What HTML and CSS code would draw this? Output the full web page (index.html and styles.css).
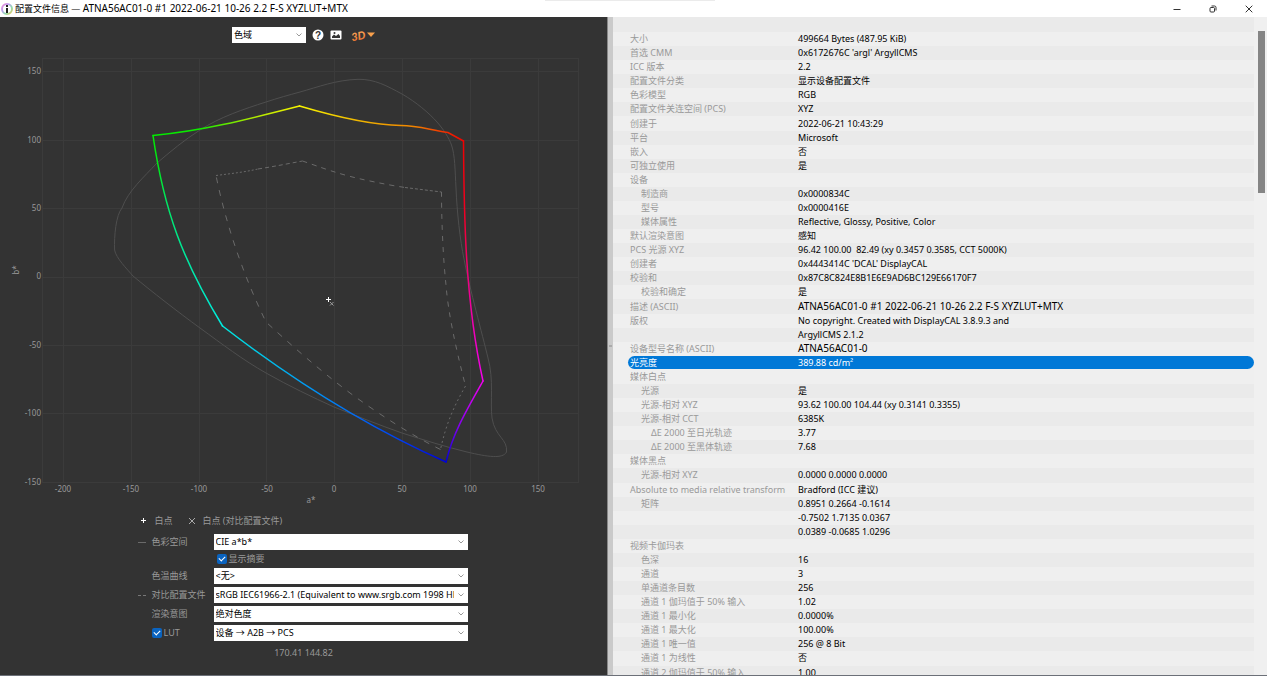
FILE: index.html
```html
<!DOCTYPE html>
<html lang="zh-CN">
<head>
<meta charset="utf-8">
<title>配置文件信息</title>
<link rel="stylesheet" href="styles.css">
</head>
<body>
<div class="window">
  <header class="titlebar">
    <svg class="app-icon" viewBox="0 0 12 12" aria-hidden="true">
      <defs><linearGradient id="ringA" x1="0" y1="0" x2="1" y2="1"><stop offset="0" stop-color="#f08ad8"/><stop offset=".35" stop-color="#b9a0ee"/><stop offset=".65" stop-color="#8fdcae"/><stop offset="1" stop-color="#e8c860"/></linearGradient></defs>
      <circle cx="6" cy="6" r="5" fill="#fff" stroke="url(#ringA)" stroke-width="2"/>
      <rect x="5" y="2" width="2" height="2" fill="#222"/><rect x="5" y="5" width="2" height="5" fill="#222"/>
    </svg>
    <h1 class="title">配置文件信息 — <span class="profile-name">ATNA56AC01-0 #1 2022-06-21 10-26 2.2 F-S XYZLUT+MTX</span></h1>
    <div class="snap-hint"></div>
    <div class="window-buttons">
      <button type="button" aria-label="最小化"><svg viewBox="0 0 8 8"><path d="M.5 4.500h7"/></svg></button>
      <button type="button" aria-label="还原"><svg viewBox="0 0 8 8"><rect x="1" y="2.500" width="4.500" height="4.500" rx="1"/><path d="M2.500 1h3q1.500 0 1.500 1.500v3"/></svg></button>
      <button type="button" aria-label="关闭"><svg viewBox="0 0 8 8"><path d="M.7.700l6.600 6.600M7.300.700l-6.600 6.600"/></svg></button>
    </div>
  </header>
  <main class="panes">
    <section class="plot-pane">
      <div class="toolbar">
        <div class="select-box view-select">
          <select aria-label="视图"><option>色域</option></select>
          <svg class="chevron" viewBox="0 0 6 4"><path d="M.5.500L3 3 5.500.500"/></svg>
        </div>
        <button type="button" class="tool" aria-label="帮助"><svg width="12" height="12" viewBox="0 0 12 12"><circle cx="6" cy="6" r="5.500" fill="#fff"/><text x="6" y="9.500" text-anchor="middle" class="help-mark">?</text></svg></button>
        <button type="button" class="tool" aria-label="保存图像"><svg width="12" height="12" viewBox="0 0 12 12"><rect x=".5" y="1.500" width="11" height="9" rx="1" fill="#fff"/><path d="M2 9V7.500L4 5.500l2 1.500L8.500 5 10 7v2z" fill="#333"/><circle cx="4.500" cy="4" r="1" fill="#333"/></svg></button>
        <button type="button" class="tool tool-3d" aria-label="3D"><svg width="24" height="14" viewBox="0 0 24 14"><defs><linearGradient id="fire" x1="0" y1="0" x2="0" y2="1"><stop offset="0" stop-color="#ffb060"/><stop offset="1" stop-color="#e8702c"/></linearGradient></defs><text x="0" y="12" class="three-d" transform="rotate(-10 7 7)">3D</text><path d="M16 4.500h8L20 9z" fill="#f9a04c"/></svg></button>
      </div>
      <svg class="plot" viewBox="0 50 607 462" role="img" aria-label="CIE a*b* 色域图">
        <defs>
          <linearGradient id="gy" gradientUnits="userSpaceOnUse" x1="153" y1="0" x2="300" y2="0"><stop offset="0" stop-color="#00ec00"/><stop offset=".32" stop-color="#10ea00"/><stop offset=".65" stop-color="#a4e800"/><stop offset="1" stop-color="#f8f400"/></linearGradient>
          <linearGradient id="yr" gradientUnits="userSpaceOnUse" x1="300" y1="0" x2="464" y2="0"><stop offset="0" stop-color="#f8f400"/><stop offset=".35" stop-color="#f0b800"/><stop offset=".7" stop-color="#f08200"/><stop offset=".88" stop-color="#f03000"/><stop offset="1" stop-color="#f00000"/></linearGradient>
          <linearGradient id="rm" gradientUnits="userSpaceOnUse" x1="0" y1="141" x2="0" y2="381"><stop offset="0" stop-color="#f00000"/><stop offset=".3" stop-color="#f00024"/><stop offset=".6" stop-color="#f00088"/><stop offset="1" stop-color="#f400f0"/></linearGradient>
          <linearGradient id="mb" gradientUnits="userSpaceOnUse" x1="0" y1="381" x2="0" y2="462"><stop offset="0" stop-color="#f400f0"/><stop offset=".55" stop-color="#8600f0"/><stop offset=".8" stop-color="#3a00e0"/><stop offset="1" stop-color="#0000d0"/></linearGradient>
          <linearGradient id="bc" gradientUnits="userSpaceOnUse" x1="446" y1="462" x2="222" y2="326"><stop offset="0" stop-color="#0000d8"/><stop offset=".2" stop-color="#0040f4"/><stop offset=".6" stop-color="#0098f4"/><stop offset="1" stop-color="#00ece0"/></linearGradient>
          <linearGradient id="cg" gradientUnits="userSpaceOnUse" x1="0" y1="326" x2="0" y2="136"><stop offset="0" stop-color="#00ece0"/><stop offset=".35" stop-color="#00e8a0"/><stop offset=".65" stop-color="#00e864"/><stop offset=".85" stop-color="#00ea18"/><stop offset="1" stop-color="#00ec00"/></linearGradient>
        </defs>
        <path class="grid" d="M42.500 58V482M63.500 58V482M131.500 58V482M199.500 58V482M266.500 58V482M334.500 58V482M402.500 58V482M470.500 58V482M538.500 58V482M578.500 58V482M42 58.500H579M42 71.500H579M42 140.500H579M42 208.500H579M42 277.500H579M42 345.500H579M42 413.500H579M42 482.500H579"/>
        <path class="locus" d="M300 92C318 87 336 80 358 79.300C375 79 387 86 402 94C416 102 429 113 437 122C444 130 449 138 451.500 145C455 155 455 170 456 188C457 212 460 240 464 259C470 290 482 333 488 358C494 380 490 402 492 418C495 437 508 439 506.500 452C503 459 488 457 467 452C446 447 424 440 402 433C379 425 357 416 334 407C312 397 289 386 266 373C243 360 222 344 200 328C178 312 151 291 133 276C127 269 116 258 114.600 250C114 236 116 215 122 208C128 191 144 177 157 163C170 152 184 140 200 130C220 117 244 109 266 102C278 98 289 95 300 92Z"/>
        <g class="compare">
          <path stroke-dasharray="2 2" d="M216 175.500C232 173.500 245 172 258 169"/>
          <path stroke-dasharray="4 3" d="M258 169C274 166.500 289 163.500 302.500 161"/>
          <path stroke-dasharray="5 5" d="M302.500 161C320 167 340 175 370 181C384 184 395 186 405 187.500"/>
          <path stroke-dasharray="3 2" d="M405 187.500L441.500 192"/>
          <path stroke-dasharray="5 6" d="M441.500 192C441.500 220 443 257 446 285C448 311 455 345 465.500 386"/>
          <path stroke-dasharray="2 3" d="M465.500 386C454 406 446 424 440.500 449.500"/>
          <path stroke-dasharray="6 7" d="M440.500 449.500C413 436 380 415 350 393C318 369 290 344 266 322C244 277 226 225 216 175.500"/>
        </g>
        <g class="gamut">
          <path stroke="url(#gy)" d="M153 135.500C202 131 245 120 299.500 106"/>
          <path stroke="url(#yr)" d="M299.500 106C330 115 367 125 401 125.500C418 125.500 430 130 448 132.500L463.500 141"/>
          <path stroke="url(#rm)" d="M463.500 141C464 216 465 300 483 381"/>
          <path stroke="url(#mb)" d="M483 381C466 411 453 433 446 462"/>
          <path stroke="url(#bc)" d="M446 462C374 430 295 382 222.500 326"/>
          <path stroke="url(#cg)" d="M222.500 326C183 261 164 211 153 135.500"/>
        </g>
        <path class="wp" d="M326 299.500h5M328.500 297v5"/>
        <path class="wp-compare" d="M330 302l3.500 3.500M333.500 302l-3.500 3.500"/>
        <g class="ticks ticks-y">
          <text x="41" y="74">150</text><text x="41" y="143">100</text><text x="41" y="211">50</text><text x="41" y="279">0</text><text x="41" y="348">-50</text><text x="41" y="416">-100</text><text x="41" y="485">-150</text>
        </g>
        <g class="ticks">
          <text x="63" y="492">-200</text><text x="131" y="492">-150</text><text x="199" y="492">-100</text><text x="267" y="492">-50</text><text x="334" y="492">0</text><text x="402" y="492">50</text><text x="470" y="492">100</text><text x="538" y="492">150</text>
          <text x="311" y="503">a*</text><text transform="translate(19 270) rotate(-90)">b*</text>
        </g>
      </svg>
      <form class="options">
        <div class="legend">
          <svg class="legend-mark" viewBox="0 0 8 8"><path d="M1 3.500h5M3.500 1v5" stroke="#fff"/></svg><span>白点</span>
          <svg class="legend-mark legend-x" viewBox="0 0 8 8"><path d="M1 1l6 6M7 1l-6 6" stroke="#aaa"/></svg><span>白点 (对比配置文件)</span>
        </div>
        <i class="dash dash-solid"></i><label for="space">色彩空间</label>
        <div class="select-box"><select id="space"><option>CIE a*b*</option></select><svg class="chevron" viewBox="0 0 6 4"><path d="M.5.500L3 3 5.500.500"/></svg></div>
        <label class="check check-summary"><input type="checkbox" checked><span>显示摘要</span></label>
        <label class="in-label" for="curve">色温曲线</label>
        <div class="select-box"><select id="curve"><option>&lt;无&gt;</option></select><svg class="chevron" viewBox="0 0 6 4"><path d="M.5.500L3 3 5.500.500"/></svg></div>
        <i class="dash dash-split"></i><label for="compare">对比配置文件</label>
        <div class="select-box"><select id="compare"><option>sRGB IEC61966-2.1 (Equivalent to www.srgb.com 1998 HP profile)</option></select><svg class="chevron" viewBox="0 0 6 4"><path d="M.5.500L3 3 5.500.500"/></svg></div>
        <label class="in-label" for="intent">渲染意图</label>
        <div class="select-box"><select id="intent"><option>绝对色度</option></select><svg class="chevron" viewBox="0 0 6 4"><path d="M.5.500L3 3 5.500.500"/></svg></div>
        <label class="check in-label"><input type="checkbox" checked><span>LUT</span></label>
        <div class="select-box"><select aria-label="LUT 方向"><option>设备 → A2B → PCS</option></select><svg class="chevron" viewBox="0 0 6 4"><path d="M.5.500L3 3 5.500.500"/></svg></div>
      </form>
      <output class="readout">170.41 144.82</output>
    </section>
    <div class="splitter"><span class="grip"></span></div>
    <section class="info-pane">
      <div class="info-list">
        <table class="info">
          <tbody>
            <tr><th scope="row">大小</th><td>499664 Bytes (487.95 KiB)</td></tr>
            <tr><th scope="row">首选 CMM</th><td>0x6172676C 'argl' ArgyllCMS</td></tr>
            <tr><th scope="row">ICC 版本</th><td>2.2</td></tr>
            <tr><th scope="row">配置文件分类</th><td>显示设备配置文件</td></tr>
            <tr><th scope="row">色彩模型</th><td>RGB</td></tr>
            <tr><th scope="row">配置文件关连空间 (PCS)</th><td>XYZ</td></tr>
            <tr><th scope="row">创建于</th><td>2022-06-21 10:43:29</td></tr>
            <tr><th scope="row">平台</th><td>Microsoft</td></tr>
            <tr><th scope="row">嵌入</th><td>否</td></tr>
            <tr><th scope="row">可独立使用</th><td>是</td></tr>
            <tr><th scope="row">设备</th><td></td></tr>
            <tr class="l1"><th scope="row">制造商</th><td>0x0000834C</td></tr>
            <tr class="l1"><th scope="row">型号</th><td>0x0000416E</td></tr>
            <tr class="l1"><th scope="row">媒体属性</th><td>Reflective, Glossy, Positive, Color</td></tr>
            <tr><th scope="row">默认渲染意图</th><td>感知</td></tr>
            <tr><th scope="row">PCS 光源 XYZ</th><td>96.42 100.00&nbsp; 82.49 (xy 0.3457 0.3585, CCT 5000K)</td></tr>
            <tr><th scope="row">创建者</th><td>0x4443414C 'DCAL' DisplayCAL</td></tr>
            <tr><th scope="row">校验和</th><td>0x87C8C824E8B1E6E9AD6BC129E66170F7</td></tr>
            <tr class="l1"><th scope="row">校验和确定</th><td>是</td></tr>
            <tr><th scope="row">描述 (ASCII)</th><td><span class="profile-name">ATNA56AC01-0 #1 2022-06-21 10-26 2.2 F-S XYZLUT+MTX</span></td></tr>
            <tr><th scope="row">版权</th><td>No copyright. Created with DisplayCAL 3.8.9.3 and</td></tr>
            <tr><th></th><td>ArgyllCMS 2.1.2</td></tr>
            <tr><th scope="row">设备型号名称 (ASCII)</th><td><span class="profile-name">ATNA56AC01-0</span></td></tr>
            <tr class="selected"><th scope="row">光亮度</th><td>389.88 cd/m²</td></tr>
            <tr><th scope="row">媒体白点</th><td></td></tr>
            <tr class="l1"><th scope="row">光源</th><td>是</td></tr>
            <tr class="l1"><th scope="row">光源-相对 XYZ</th><td>93.62 100.00 104.44 (xy 0.3141 0.3355)</td></tr>
            <tr class="l1"><th scope="row">光源-相对 CCT</th><td>6385K</td></tr>
            <tr class="l2"><th scope="row">ΔE 2000 至日光轨迹</th><td>3.77</td></tr>
            <tr class="l2"><th scope="row">ΔE 2000 至黑体轨迹</th><td>7.68</td></tr>
            <tr><th scope="row">媒体黑点</th><td></td></tr>
            <tr class="l1"><th scope="row">光源-相对 XYZ</th><td>0.0000 0.0000 0.0000</td></tr>
            <tr><th scope="row">Absolute to media relative transform</th><td>Bradford (ICC 建议)</td></tr>
            <tr class="l1"><th scope="row">矩阵</th><td>0.8951 0.2664 -0.1614</td></tr>
            <tr><th></th><td>-0.7502 1.7135 0.0367</td></tr>
            <tr><th></th><td>0.0389 -0.0685 1.0296</td></tr>
            <tr><th scope="row">视频卡伽玛表</th><td></td></tr>
            <tr class="l1"><th scope="row">色深</th><td>16</td></tr>
            <tr class="l1"><th scope="row">通道</th><td>3</td></tr>
            <tr class="l1"><th scope="row">单通道条目数</th><td>256</td></tr>
            <tr class="l1"><th scope="row">通道 1 伽玛值于 50% 输入</th><td>1.02</td></tr>
            <tr class="l1"><th scope="row">通道 1 最小化</th><td>0.0000%</td></tr>
            <tr class="l1"><th scope="row">通道 1 最大化</th><td>100.00%</td></tr>
            <tr class="l1"><th scope="row">通道 1 唯一值</th><td>256 @ 8 Bit</td></tr>
            <tr class="l1"><th scope="row">通道 1 为线性</th><td>否</td></tr>
            <tr class="l1"><th scope="row">通道 2 伽玛值于 50% 输入</th><td>1.00</td></tr>
          </tbody>
        </table>
      </div>
      <div class="scrollbar"><div class="thumb"></div></div>
    </section>
  </main>
</div>
</body>
</html>
```
FILE: styles.css
```css
* { box-sizing: border-box; }
html, body { height: 100%; }
body {
  margin: 0;
  overflow: hidden;
  font-family: "Noto Sans", "Noto Sans CJK SC", sans-serif;
  font-size: 9px;
  line-height: 14px;
}
button { border: 0; padding: 0; background: none; }
svg { display: block; }

.window { display: flex; flex-direction: column; height: 100%; border-bottom: 1px solid #6c7078; }
.titlebar { position: relative; display: flex; align-items: center; height: 17px; padding-left: 1px; background: #fff; color: #000; }
.app-icon { width: 12px; height: 12px; }
.title { margin: 0 auto 0 2px; font-size: 9px; font-weight: 400; white-space: nowrap; }
.profile-name { font-size: 10px; line-height: 1; }
.snap-hint { position: absolute; top: 0; left: 43%; width: 170px; height: 1px; background: #ebebeb; }
.window-buttons { display: flex; }
.window-buttons button { display: grid; place-items: center; width: 36px; height: 17px; }
.window-buttons svg { width: 8px; height: 8px; fill: none; stroke: #333; stroke-width: 1; }

.panes { flex: 1; min-height: 0; display: grid; grid-template-columns: 607fr 6px 654fr; grid-template-rows: minmax(0, 1fr); }

.plot-pane { display: flex; flex-direction: column; background: #333; color: #999; overflow: hidden; }
.toolbar { display: flex; justify-content: center; align-items: center; gap: 6px; height: 33px; padding-top: 2px; }
.view-select { width: 74px; }
.tool { display: block; }
.tool-3d { margin-left: 3px; }
.help-mark { font-size: 10px; font-weight: 700; fill: #333; }
.three-d { font-family: Lato, sans-serif; font-size: 11px; font-style: italic; font-weight: 900; fill: url(#fire); }

.plot { width: 100%; flex: 0 1 auto; min-height: 0; }
.grid { fill: none; stroke: #3b3b3b; }
.locus { fill: none; stroke: #4e4e4e; }
.compare { fill: none; stroke: #6a6a6a; }
.gamut { fill: none; stroke-width: 1.5; stroke-linecap: round; }
.wp { stroke: #fff; }
.wp-compare { stroke: #999; }
.ticks { font-size: 8px; fill: #999; text-anchor: middle; }
.ticks-y { text-anchor: end; }

.options { align-self: center; display: grid; grid-template-columns: 14px 62px 254px; row-gap: 3px; align-items: center; padding-right: 2px; white-space: nowrap; }
.legend { grid-column: 1 / -1; display: flex; align-items: center; gap: 7px; height: 19px; padding: 0 0 2px 2px; }
.legend-mark { width: 8px; height: 8px; fill: none; stroke-width: 1; }
.legend-x { margin-left: 8px; }
.in-label { grid-column: 2; }
.dash { width: 8px; height: 1px; background: #6a6a6a; }
.dash-split { background: linear-gradient(90deg, #777 3px, transparent 3px 5px, #777 5px); }
.select-box { position: relative; height: 16px; }
.select-box select {
  appearance: none;
  display: block;
  width: 100%;
  height: 16px;
  padding: 0 14px 0 2px;
  border: 0;
  border-radius: 0;
  background: #fff;
  color: #000;
  font-family: inherit;
  font-size: 9px;
  line-height: 16px;
}
.chevron { position: absolute; top: 6px; right: 4px; width: 6px; height: 4px; fill: none; stroke: #999; pointer-events: none; }
.check { display: flex; align-items: center; gap: 2px; height: 12px; }
.check-summary { grid-column: 3; padding-left: 3px; }
.check input {
  appearance: none;
  display: grid;
  place-items: center;
  width: 10px;
  height: 10px;
  margin: 0;
  border-radius: 2px;
  background: #0a63bf;
}
.check input::before { content: ""; width: 5px; height: 3px; border: solid #fff; border-width: 0 0 1px 1px; transform: translateY(-1px) rotate(-45deg); }
.readout { margin-top: 5px; text-align: center; }

.splitter { display: flex; align-items: center; justify-content: center; background: #cacaca; border-left: 1px solid #888; }
.grip { width: 3px; height: 2px; background: #aaa; }

.info-pane { display: grid; grid-template-columns: minmax(0, 1fr) 13px; background: #f0f0f0; }
.info-list { min-height: 0; overflow: hidden; padding-top: 15px; background: #eaeaea; }
.info { width: 100%; height: calc(100% + 5px); border-collapse: collapse; table-layout: fixed; }
.info tr { position: relative; z-index: 0; background: #eaeaea; }
.info tr:nth-child(odd) { background: #efefef; }
.info th, .info td { padding: 0; font-weight: 400; line-height: 14px; text-align: left; white-space: nowrap; }
.info th { width: 185px; padding-left: 17px; color: #999; }
.info .l1 th { padding-left: 28px; }
.info .l2 th { padding-left: 38px; }
.info td { color: #000; }
.info tr.selected { background: #efefef; }
.info .selected th, .info .selected td { color: #fff; }
.info .selected th::before { content: ""; position: absolute; z-index: -1; top: 0; right: 0; bottom: 1px; left: 15px; border-radius: 7px; background: #0078d7; }
.scrollbar { padding: 14px 2px 0 4px; }
.thumb { height: 162px; background: #858585; }
```
